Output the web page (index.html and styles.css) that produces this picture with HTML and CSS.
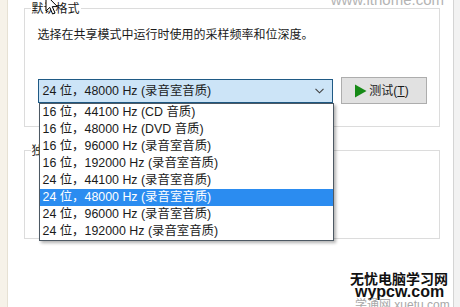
FILE: index.html
```html
<!DOCTYPE html>
<html lang="zh-CN">
<head>
<meta charset="utf-8">
<link rel="stylesheet" href="styles.css">
</head>
<body>
<div class="screen">
  <div class="lstrip"></div>
  <div class="main">
    <div class="group g1">
      <span class="group-title">默认格式</span>
      <p class="desc">选择在共享模式中运行时使用的采样频率和位深度。</p>
      <div class="row">
        <div class="combo">
          <span class="combo-text">24 位，48000 Hz (录音室音质)</span>
          <svg class="chev" width="9" height="6" viewBox="0 0 9 6"><path d="M0.5 0.8 L4.5 4.8 L8.5 0.8" fill="none" stroke="#404040" stroke-width="1.1"/></svg>
          <ul class="list">
            <li>16 位，44100 Hz (CD 音质)</li>
            <li>16 位，48000 Hz (DVD 音质)</li>
            <li>16 位，96000 Hz (录音室音质)</li>
            <li>16 位，192000 Hz (录音室音质)</li>
            <li>24 位，44100 Hz (录音室音质)</li>
            <li class="sel">24 位，48000 Hz (录音室音质)</li>
            <li>24 位，96000 Hz (录音室音质)</li>
            <li>24 位，192000 Hz (录音室音质)</li>
          </ul>
        </div>
        <button class="btn"><svg width="13" height="14" viewBox="0 0 13 14"><path d="M1 0.5 L12.5 7 L1 13.5 Z" fill="#168a16"/></svg><span>测试(<u>T</u>)</span></button>
      </div>
    </div>
    <div class="group g2">
      <span class="group-title">独占模式</span>
    </div>
  </div>
  <div class="rstrip"></div>
</div>
<div class="wm-top">www.ithome.com</div>
<div class="wm-bottom">
  <div class="wm-cn">无忧电脑学习网</div>
  <div class="wm-en">wypcw.com</div>
  <div class="wm-sub">学通网 xuetu.com</div>
</div>
<svg class="cursor" width="14" height="22" viewBox="0 0 14 22"><path d="M1 1 L1 17 L4.8 13.4 L7.6 20 L10 19 L7.3 12.6 L12.4 12.6 Z" fill="#fff" stroke="#000" stroke-width="1"/></svg>
</body>
</html>
```
FILE: styles.css
```css
* { box-sizing: border-box; }
html, body { margin: 0; padding: 0; }
body {
  width: 460px;
  height: 307px;
  overflow: hidden;
  background: #fff;
  position: relative;
  font-family: "Liberation Sans", "Noto Sans CJK SC", sans-serif;
  font-size: 12px;
  line-height: 16px;
  color: #1a1a1a;
}
.screen {
  display: flex;
  height: 307px;
}
.lstrip {
  width: 8px;
  background: #f6f2e9;
  border-right: 1px solid #e6e1d4;
}
.rstrip {
  width: 8px;
  background: #f2f2f2;
  border-left: 1px solid #d4d4d4;
}
.main {
  flex: 1;
  padding: 8px 13px 0 16px;
  background: #fff;
}
.group {
  border: 1px solid #dcdcdc;
  width: 416px;
}
.group-title {
  display: block;
  width: max-content;
  margin: -8px 0 0 6px;
  padding: 0 1px;
  background: #fff;
  height: 16px;
  line-height: 16px;
}
.g1 { height: 119px; }
.desc {
  margin: 10px 0 0 13px;
  line-height: 16px;
}
.row {
  display: flex;
  align-items: center;
  margin-top: 34px;
  padding-left: 13px;
  gap: 8px;
}
.combo {
  position: relative;
  width: 295px;
  height: 24px;
  background: #cce4f7;
  border: 1px solid #1f5a85;
  display: flex;
  align-items: center;
  padding: 0 0 0 4px;
  font-size: 12.4px;
}
.combo-text { flex: 1; line-height: 16px; }
.chev { margin-right: 8px; }
.list {
  position: absolute;
  left: 0;
  top: 23px;
  width: 295px;
  margin: 0;
  padding: 0;
  list-style: none;
  background: #fff;
  border: 1px solid #4d5964;
  box-shadow: 2px 2px 3px rgba(0,0,0,0.3);
  z-index: 2;
}
.list li {
  height: 17px;
  line-height: 17px;
  padding-left: 3px;
  white-space: nowrap;
}
.list li.sel {
  background: #2b8cf0;
  color: #fff;
}
.btn {
  width: 86px;
  height: 27px;
  background: #e1e1e1;
  border: 1px solid #adadad;
  display: flex;
  align-items: center;
  justify-content: center;
  gap: 2px;
  font: inherit;
  color: #1a1a1a;
  padding: 0 4px 0 0;
}
.btn u { text-decoration: underline; }
.g2 {
  margin-top: 23px;
  height: 89px;
}
.wm-top {
  position: absolute;
  right: 16px;
  top: -9px;
  font-size: 15px;
  line-height: 18px;
  color: #b4b4b4;
  font-family: "Liberation Sans", sans-serif;
}
.wm-bottom {
  position: absolute;
  left: 350px;
  top: 271px;
  width: 110px;
  line-height: 1;
}
.wm-cn {
  font-family: "Noto Sans CJK SC", sans-serif;
  font-weight: 700;
  font-size: 14px;
  color: #111;
  height: 14px;
  line-height: 14px;
}
.wm-en {
  font-family: "Liberation Sans", sans-serif;
  font-weight: 700;
  font-size: 16px;
  color: #111;
  margin-left: 5px;
  height: 14px;
  line-height: 14px;
}
.wm-sub {
  font-family: "Liberation Sans", "Noto Sans CJK SC", sans-serif;
  font-size: 12px;
  color: #a8a8a8;
  margin-left: 5px;
  line-height: 12px;
}
.cursor {
  position: absolute;
  left: 45px;
  top: -6px;
}
```
